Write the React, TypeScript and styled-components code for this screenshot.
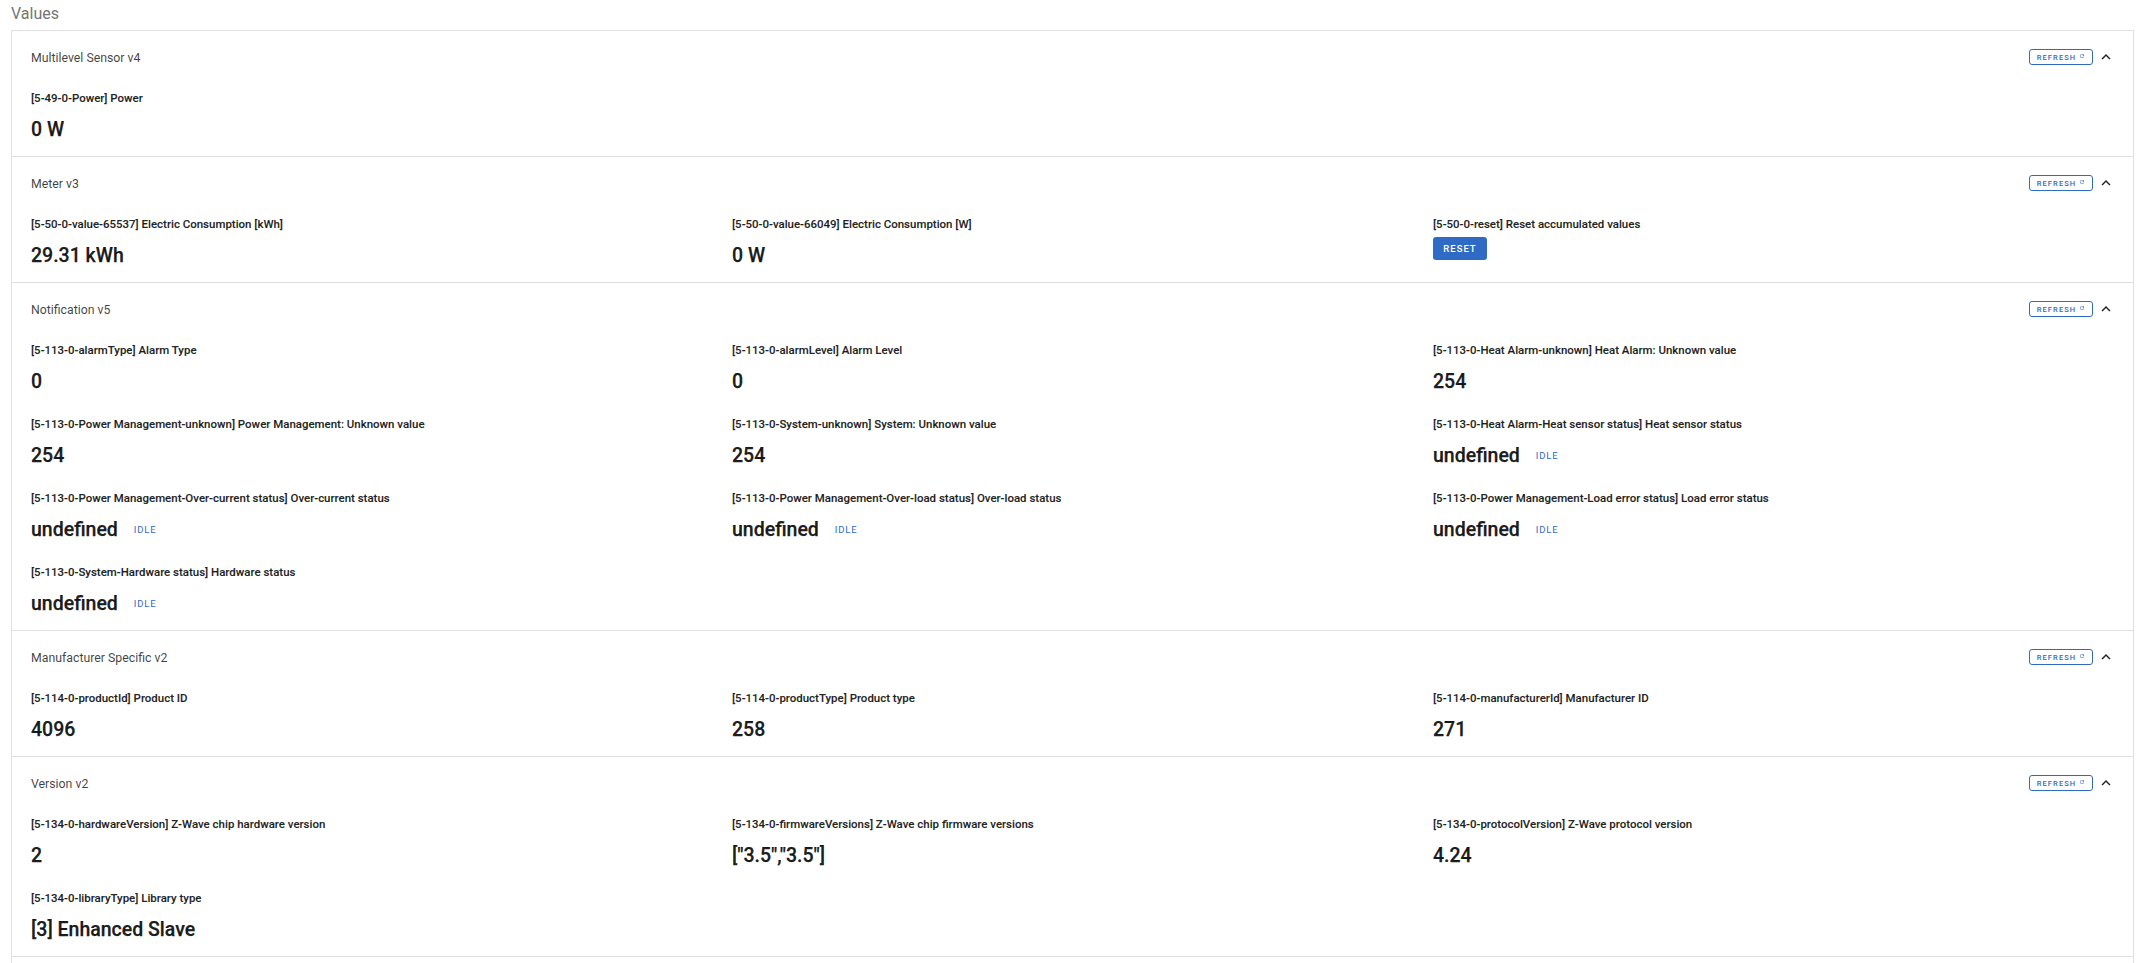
import React from "react";
import styled, { createGlobalStyle } from "styled-components";

const Global = createGlobalStyle`
  html, body { margin: 0; padding: 0; background: #fff; overflow: hidden; height: 963px; }
  body { font-family: Roboto, "Liberation Sans", sans-serif; color: rgba(0,0,0,.87); }
`;

const Page = styled.div`
  padding: 0 9px 0 11px;
  height: 963px;
  overflow: hidden;
`;
const PageTitle = styled.div`
  height: 30px;
  line-height: 28px;
  font-size: 16px;
  color: #757575;
`;
const Panel = styled.div`
  border: 1px solid #e0e0e0;
  border-bottom: none;
`;
const Section = styled.section`
  border-bottom: 1px solid #e0e0e0;
  padding: 0 18px 0 19px;
`;
const NextSection = styled.section`
  height: 51px;
`;
const Header = styled.div`
  box-sizing: border-box;
  height: 51px;
  padding-top: 1px;
  display: flex;
  align-items: center;
  justify-content: space-between;
`;
const SectionTitle = styled.div`
  font-size: 12.3px;
  margin-top: 1px;
  color: rgba(0,0,0,.75);
`;
const Actions = styled.div`
  display: flex;
  align-items: center;
  gap: 4px;
`;
const RefreshButton = styled.button`
  box-sizing: border-box;
  width: 64px;
  height: 16px;
  padding: 0;
  border: 1px solid #2f6bc4;
  border-radius: 3px;
  background: #fff;
  color: #2f6bc4;
  font: 500 7.5px Roboto, sans-serif;
  letter-spacing: 1.1px;
  display: flex;
  align-items: center;
  justify-content: center;
  gap: 3px;
  svg { margin-bottom: 3px; }
`;
const Chevron = styled.svg`
  width: 18px;
  height: 18px;
  fill: #212121;
`;
const Grid = styled.div`
  display: grid;
  grid-template-columns: repeat(3, 701px);
  grid-auto-rows: 74px;
`;
const Cell = styled.div`
  padding-top: 8px;
`;
const Label = styled.div`
  font-size: 11.48px;
  font-weight: 500;
  line-height: 16px;
  color: rgba(0,0,0,.87);
  -webkit-text-stroke: .15px rgba(0,0,0,.87);
  white-space: nowrap;
`;
const ValueRow = styled.div`
  display: flex;
  align-items: center;
  gap: 16px;
  margin-top: 8px;
  height: 30px;
`;
const Value = styled.div`
  font-size: 19.5px;
  font-weight: 500;
  color: rgba(0,0,0,.9);
  -webkit-text-stroke: .25px rgba(0,0,0,.9);
`;
const Status = styled.span`
  font-size: 9.5px;
  letter-spacing: .8px;
  color: #2f6bc4;
`;
const ResetButton = styled.button`
  display: block;
  width: 54px;
  height: 23px;
  margin-top: 5px;
  border: 0;
  border-radius: 3px;
  padding: 0;
  background: #2f6bc4;
  color: #fff;
  font: 500 9.5px Roboto, sans-serif;
  letter-spacing: 1px;
`;

type Item = { label: string; value?: string; idle?: boolean; reset?: boolean };
type Group = { title: string; items: Item[] };

const groups: Group[] = [
  { title: "Multilevel Sensor v4", items: [{ label: "[5-49-0-Power] Power", value: "0 W" }] },
  {
    title: "Meter v3",
    items: [
      { label: "[5-50-0-value-65537] Electric Consumption [kWh]", value: "29.31 kWh" },
      { label: "[5-50-0-value-66049] Electric Consumption [W]", value: "0 W" },
      { label: "[5-50-0-reset] Reset accumulated values", reset: true },
    ],
  },
  {
    title: "Notification v5",
    items: [
      { label: "[5-113-0-alarmType] Alarm Type", value: "0" },
      { label: "[5-113-0-alarmLevel] Alarm Level", value: "0" },
      { label: "[5-113-0-Heat Alarm-unknown] Heat Alarm: Unknown value", value: "254" },
      { label: "[5-113-0-Power Management-unknown] Power Management: Unknown value", value: "254" },
      { label: "[5-113-0-System-unknown] System: Unknown value", value: "254" },
      { label: "[5-113-0-Heat Alarm-Heat sensor status] Heat sensor status", value: "undefined", idle: true },
      { label: "[5-113-0-Power Management-Over-current status] Over-current status", value: "undefined", idle: true },
      { label: "[5-113-0-Power Management-Over-load status] Over-load status", value: "undefined", idle: true },
      { label: "[5-113-0-Power Management-Load error status] Load error status", value: "undefined", idle: true },
      { label: "[5-113-0-System-Hardware status] Hardware status", value: "undefined", idle: true },
    ],
  },
  {
    title: "Manufacturer Specific v2",
    items: [
      { label: "[5-114-0-productId] Product ID", value: "4096" },
      { label: "[5-114-0-productType] Product type", value: "258" },
      { label: "[5-114-0-manufacturerId] Manufacturer ID", value: "271" },
    ],
  },
  {
    title: "Version v2",
    items: [
      { label: "[5-134-0-hardwareVersion] Z-Wave chip hardware version", value: "2" },
      { label: "[5-134-0-firmwareVersions] Z-Wave chip firmware versions", value: '["3.5","3.5"]' },
      { label: "[5-134-0-protocolVersion] Z-Wave protocol version", value: "4.24" },
      { label: "[5-134-0-libraryType] Library type", value: "[3] Enhanced Slave" },
    ],
  },
];

export default function App() {
  return (
    <Page>
      <Global />
      <PageTitle>Values</PageTitle>
      <Panel>
        {groups.map((g) => (
          <Section key={g.title}>
            <Header>
              <SectionTitle>{g.title}</SectionTitle>
              <Actions>
                <RefreshButton>
                  REFRESH
                  <svg width="6" height="6" viewBox="0 0 24 24" fill="#2f6bc4">
                    <path d="M17.65 6.35A7.96 7.96 0 0 0 12 4a8 8 0 1 0 7.73 10h-2.08A6 6 0 1 1 12 6c1.66 0 3.14.69 4.22 1.78L13 11h7V4l-2.35 2.35z" />
                  </svg>
                </RefreshButton>
                <Chevron viewBox="0 0 24 24">
                  <path d="M7.41 15.41 12 10.83l4.59 4.58L18 14l-6-6-6 6z" />
                </Chevron>
              </Actions>
            </Header>
            <Grid>
              {g.items.map((it) => (
                <Cell key={it.label}>
                  <Label>{it.label}</Label>
                  {it.reset ? (
                    <ResetButton>RESET</ResetButton>
                  ) : (
                    <ValueRow>
                      <Value>{it.value}</Value>
                      {it.idle && <Status>IDLE</Status>}
                    </ValueRow>
                  )}
                </Cell>
              ))}
            </Grid>
          </Section>
        ))}
        <NextSection />
      </Panel>
    </Page>
  );
}
